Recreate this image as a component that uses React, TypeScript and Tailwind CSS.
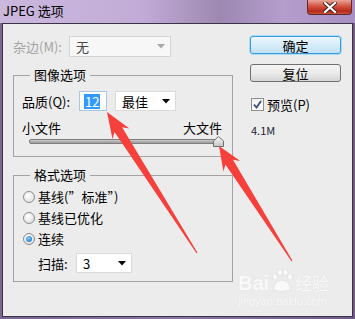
import React from "react";

const FONT = { fontFamily: '"Noto Sans CJK SC", "Noto Sans", sans-serif' };

function Arrow({ tip, tail, head = 22, hw = 10, sw = 4, tw = 0.6 }: { tip: [number, number]; tail: [number, number]; head?: number; hw?: number; sw?: number; tw?: number }) {
  const dx = tail[0] - tip[0];
  const dy = tail[1] - tip[1];
  const len = Math.hypot(dx, dy);
  const ux = dx / len, uy = dy / len;
  const px = uy, py = -ux;
  const bx = tip[0] + ux * head, by = tip[1] + uy * head;
  const nx = tip[0] + ux * (head - 5), ny = tip[1] + uy * (head - 5);
  const pts = [
    [tip[0], tip[1]],
    [bx + px * hw, by + py * hw],
    [nx + px * sw, ny + py * sw],
    [tail[0] + px * tw, tail[1] + py * tw],
    [tail[0] - px * tw, tail[1] - py * tw],
    [nx - px * sw, ny - py * sw],
    [bx - px * hw, by - py * hw],
  ];
  return <polygon points={pts.map((p) => p.join(",")).join(" ")} fill="#f5403c" />;
}

function Select({ w, text, disabled }: { w: string; text: string; disabled?: boolean }) {
  return (
    <div className={`${w} h-full flex items-center justify-between border ${disabled ? "border-[#d4d4d4] bg-[#f7f7f7] text-[#4a4a4a]" : "border-[#dadada] bg-white text-black"} pl-[6px] pr-[5px]`}>
      <span className="text-[13px] leading-none">{text}</span>
      <svg width="8" height="5" viewBox="0 0 8 5">
        <polygon points="0,0 8,0 4,4.5" fill={disabled ? "#a8a8a8" : "#000"} />
      </svg>
    </div>
  );
}

function Radio({ checked, label }: { checked?: boolean; label: string }) {
  return (
    <div className="h-[21px] flex items-center">
      <div className="w-[12px] h-[12px] rounded-full border border-[#8c8c8c] bg-[radial-gradient(circle_at_40%_35%,#ffffff,#d8d8d8)] flex items-center justify-center">
        {checked && <div className="w-[6px] h-[6px] rounded-full bg-[radial-gradient(circle_at_40%_35%,#7fd0ff,#1564b0)]" />}
      </div>
      <span className="ml-[3px] text-[13px] leading-none text-black">{label}</span>
    </div>
  );
}

export default function App() {
  return (
    <div className="relative w-[355px] h-[319px] overflow-hidden flex flex-col bg-[linear-gradient(90deg,#7a6690,#8a75a3_50%,#6f5b86)]" style={FONT}>
      {/* title bar */}
      <div className="h-[23px] flex justify-between bg-[linear-gradient(90deg,#cbb8dd,#c2acd7_40%,#9d88b2_62%,#b59dcc_80%,#a88fc3)]">
        <span className="pl-[3px] pt-[3px] text-[13px] leading-[16px] text-black">JPEG 选项</span>
        <div className="mr-[3px] w-[45px] h-[15px] rounded-b-[4px] border border-t-0 border-[#5e2a2a] bg-[linear-gradient(180deg,#e9a69a,#d5503e_45%,#b9291a_80%,#c9503c)] flex items-center justify-center">
          <svg width="14" height="11" viewBox="0 0 14 11">
            <path d="M2 1 L12 10 M12 1 L2 10" stroke="#3b2222" strokeWidth="4" strokeLinecap="square" />
            <path d="M2 1 L12 10 M12 1 L2 10" stroke="#ffffff" strokeWidth="2.2" strokeLinecap="square" />
          </svg>
        </div>
      </div>

      {/* dialog body */}
      <div className="ml-[2px] mr-[2px] h-[294px] border border-[#3a3348] bg-[#ececec] flex">
        {/* left column */}
        <div className="ml-[10px] w-[220px] pt-[12px] flex flex-col">
          <div className="h-[21px] flex items-center">
            <span className="w-[56px] text-[13px] leading-none text-[#a4a4a4]">杂边(M):</span>
            <Select w="w-[102px]" text="无" disabled />
          </div>

          {/* 图像选项 */}
          <div className="relative mt-[18px] h-[82px] border border-[#a3a3a3] flex flex-col pt-[15px]">
            <span className="absolute left-[16px] top-[-9px] px-[4px] bg-[#ececec] text-[13px] leading-[16px] text-black">图像选项</span>
            <div className="h-[20px] flex items-center pl-[8px]">
              <span className="w-[57px] text-[13px] leading-none text-black">品质(Q):</span>
              <div className="w-[28px] h-[20px] border border-[#a9c6e2] bg-white flex items-center pl-[4px]">
                <span className="bg-[#3399ff] text-white text-[13px] leading-[15px] px-[1px]">12</span>
              </div>
              <div className="ml-[8px] h-[20px]">
                <Select w="w-[61px]" text="最佳" />
              </div>
            </div>
            <div className="mt-[9px] h-[16px] flex justify-between pl-[8px] pr-[10px] text-[13px] leading-[16px] text-black">
              <span>小文件</span>
              <span>大文件</span>
            </div>
            <div className="relative ml-[15px] w-[189px] h-[11px] flex items-center">
              <div className="w-full h-[5px] rounded-[2px] border border-[#7e7e7e] bg-[linear-gradient(180deg,#c9c9c9,#9a9a9a)]" />
              <svg className="absolute left-[184px] top-0" width="11" height="11" viewBox="0 0 11 11">
                <defs>
                  <linearGradient id="th" x1="0" y1="0" x2="0" y2="1">
                    <stop offset="0" stopColor="#fafafa" />
                    <stop offset="1" stopColor="#c4c4c4" />
                  </linearGradient>
                </defs>
                <polygon points="5.5,0.5 10.5,5 10.5,10.5 0.5,10.5 0.5,5" fill="url(#th)" stroke="#6e6e6e" strokeWidth="1" />
              </svg>
            </div>
          </div>

          {/* 格式选项 */}
          <div className="relative mt-[18px] h-[107px] border border-[#a3a3a3] flex flex-col pt-[10px] pl-[9px]">
            <span className="absolute left-[16px] top-[-9px] px-[4px] bg-[#ececec] text-[13px] leading-[16px] text-black">格式选项</span>
            <Radio label={"基线(\u201D标准\u201D)"} />
            <Radio label="基线已优化" />
            <Radio label="连续" checked />
            <div className="mt-[4px] h-[20px] flex items-center pl-[15px]">
              <span className="w-[38px] text-[13px] leading-none text-black">扫描:</span>
              <Select w="w-[56px]" text="3" />
            </div>
          </div>
        </div>

        {/* right column */}
        <div className="ml-[17px] w-[91px] pt-[12px] flex flex-col">
          <button className="h-[18px] rounded-[3px] border border-[#3c9ad6] bg-[linear-gradient(180deg,#eef7fd,#d6ecf9_50%,#c2e1f5)] shadow-[0_0_0_1px_#a7dcf7] text-[13px] leading-none text-black flex items-center justify-center">
            确定
          </button>
          <button className="mt-[10px] h-[18px] rounded-[3px] border border-[#707070] bg-[linear-gradient(180deg,#f3f3f3,#ebebeb_50%,#d6d6d6)] text-[13px] leading-none text-black flex items-center justify-center">
            复位
          </button>
          <div className="mt-[16px] h-[13px] flex items-center ml-[1px]">
            <div className="w-[13px] h-[13px] border border-[#8e8f8f] bg-[linear-gradient(180deg,#f0f0f0,#ffffff)] flex items-center justify-center">
              <svg width="9" height="9" viewBox="0 0 9 9">
                <path d="M1 4.5 L3.5 7.5 L8 1" stroke="#3a4f76" strokeWidth="1.8" fill="none" />
              </svg>
            </div>
            <span className="ml-[3px] text-[13px] leading-none text-black">预览(P)</span>
          </div>
          <span className="mt-[12px] ml-[1px] text-[11px] leading-[14px] text-[#1b2136]">4.1M</span>
        </div>
      </div>

      {/* watermark */}
      <div className="absolute left-[238px] top-[268px] flex flex-col items-start pointer-events-none">
        <div className="flex items-end">
          <span className="text-[20px] leading-[24px] font-bold text-[#f9f9f9] [text-shadow:0_0_1px_#dedede]" style={{ fontFamily: '"Liberation Sans", sans-serif' }}>Bai</span>
          <svg width="26" height="26" viewBox="0 0 26 26" className="mb-[1px]">
            <g fill="#f9f9f9" stroke="#e0e0e0" strokeWidth="0.8">
              <ellipse cx="6" cy="9" rx="2.6" ry="3.2" />
              <ellipse cx="11" cy="4.5" rx="2.6" ry="3.2" />
              <ellipse cx="16.5" cy="4.5" rx="2.6" ry="3.2" />
              <ellipse cx="21" cy="9" rx="2.6" ry="3.2" />
              <path d="M4 22 Q5 13 13 12 Q21 13 22 22 Q13 25 4 22 Z" />
            </g>
          </svg>
          <span className="text-[17px] leading-[24px] text-[#f9f9f9] [text-shadow:0_0_1px_#dedede]" style={{ fontFamily: '"Noto Sans CJK SC", sans-serif' }}>经验</span>
        </div>
        <span className="text-[11px] leading-[13px] text-[#f9f9f9] [text-shadow:0_0_1px_#dedede]" style={{ fontFamily: '"Liberation Sans", sans-serif' }}>jingyan.baidu.com</span>
      </div>

      {/* red arrows */}
      <svg className="absolute left-0 top-0 pointer-events-none" width="355" height="319">
        <Arrow tip={[107, 112]} tail={[197, 253]} head={26} hw={10} sw={4.5} />
        <Arrow tip={[219, 146]} tail={[292, 261]} head={24} hw={10} sw={4.5} />
      </svg>
    </div>
  );
}
